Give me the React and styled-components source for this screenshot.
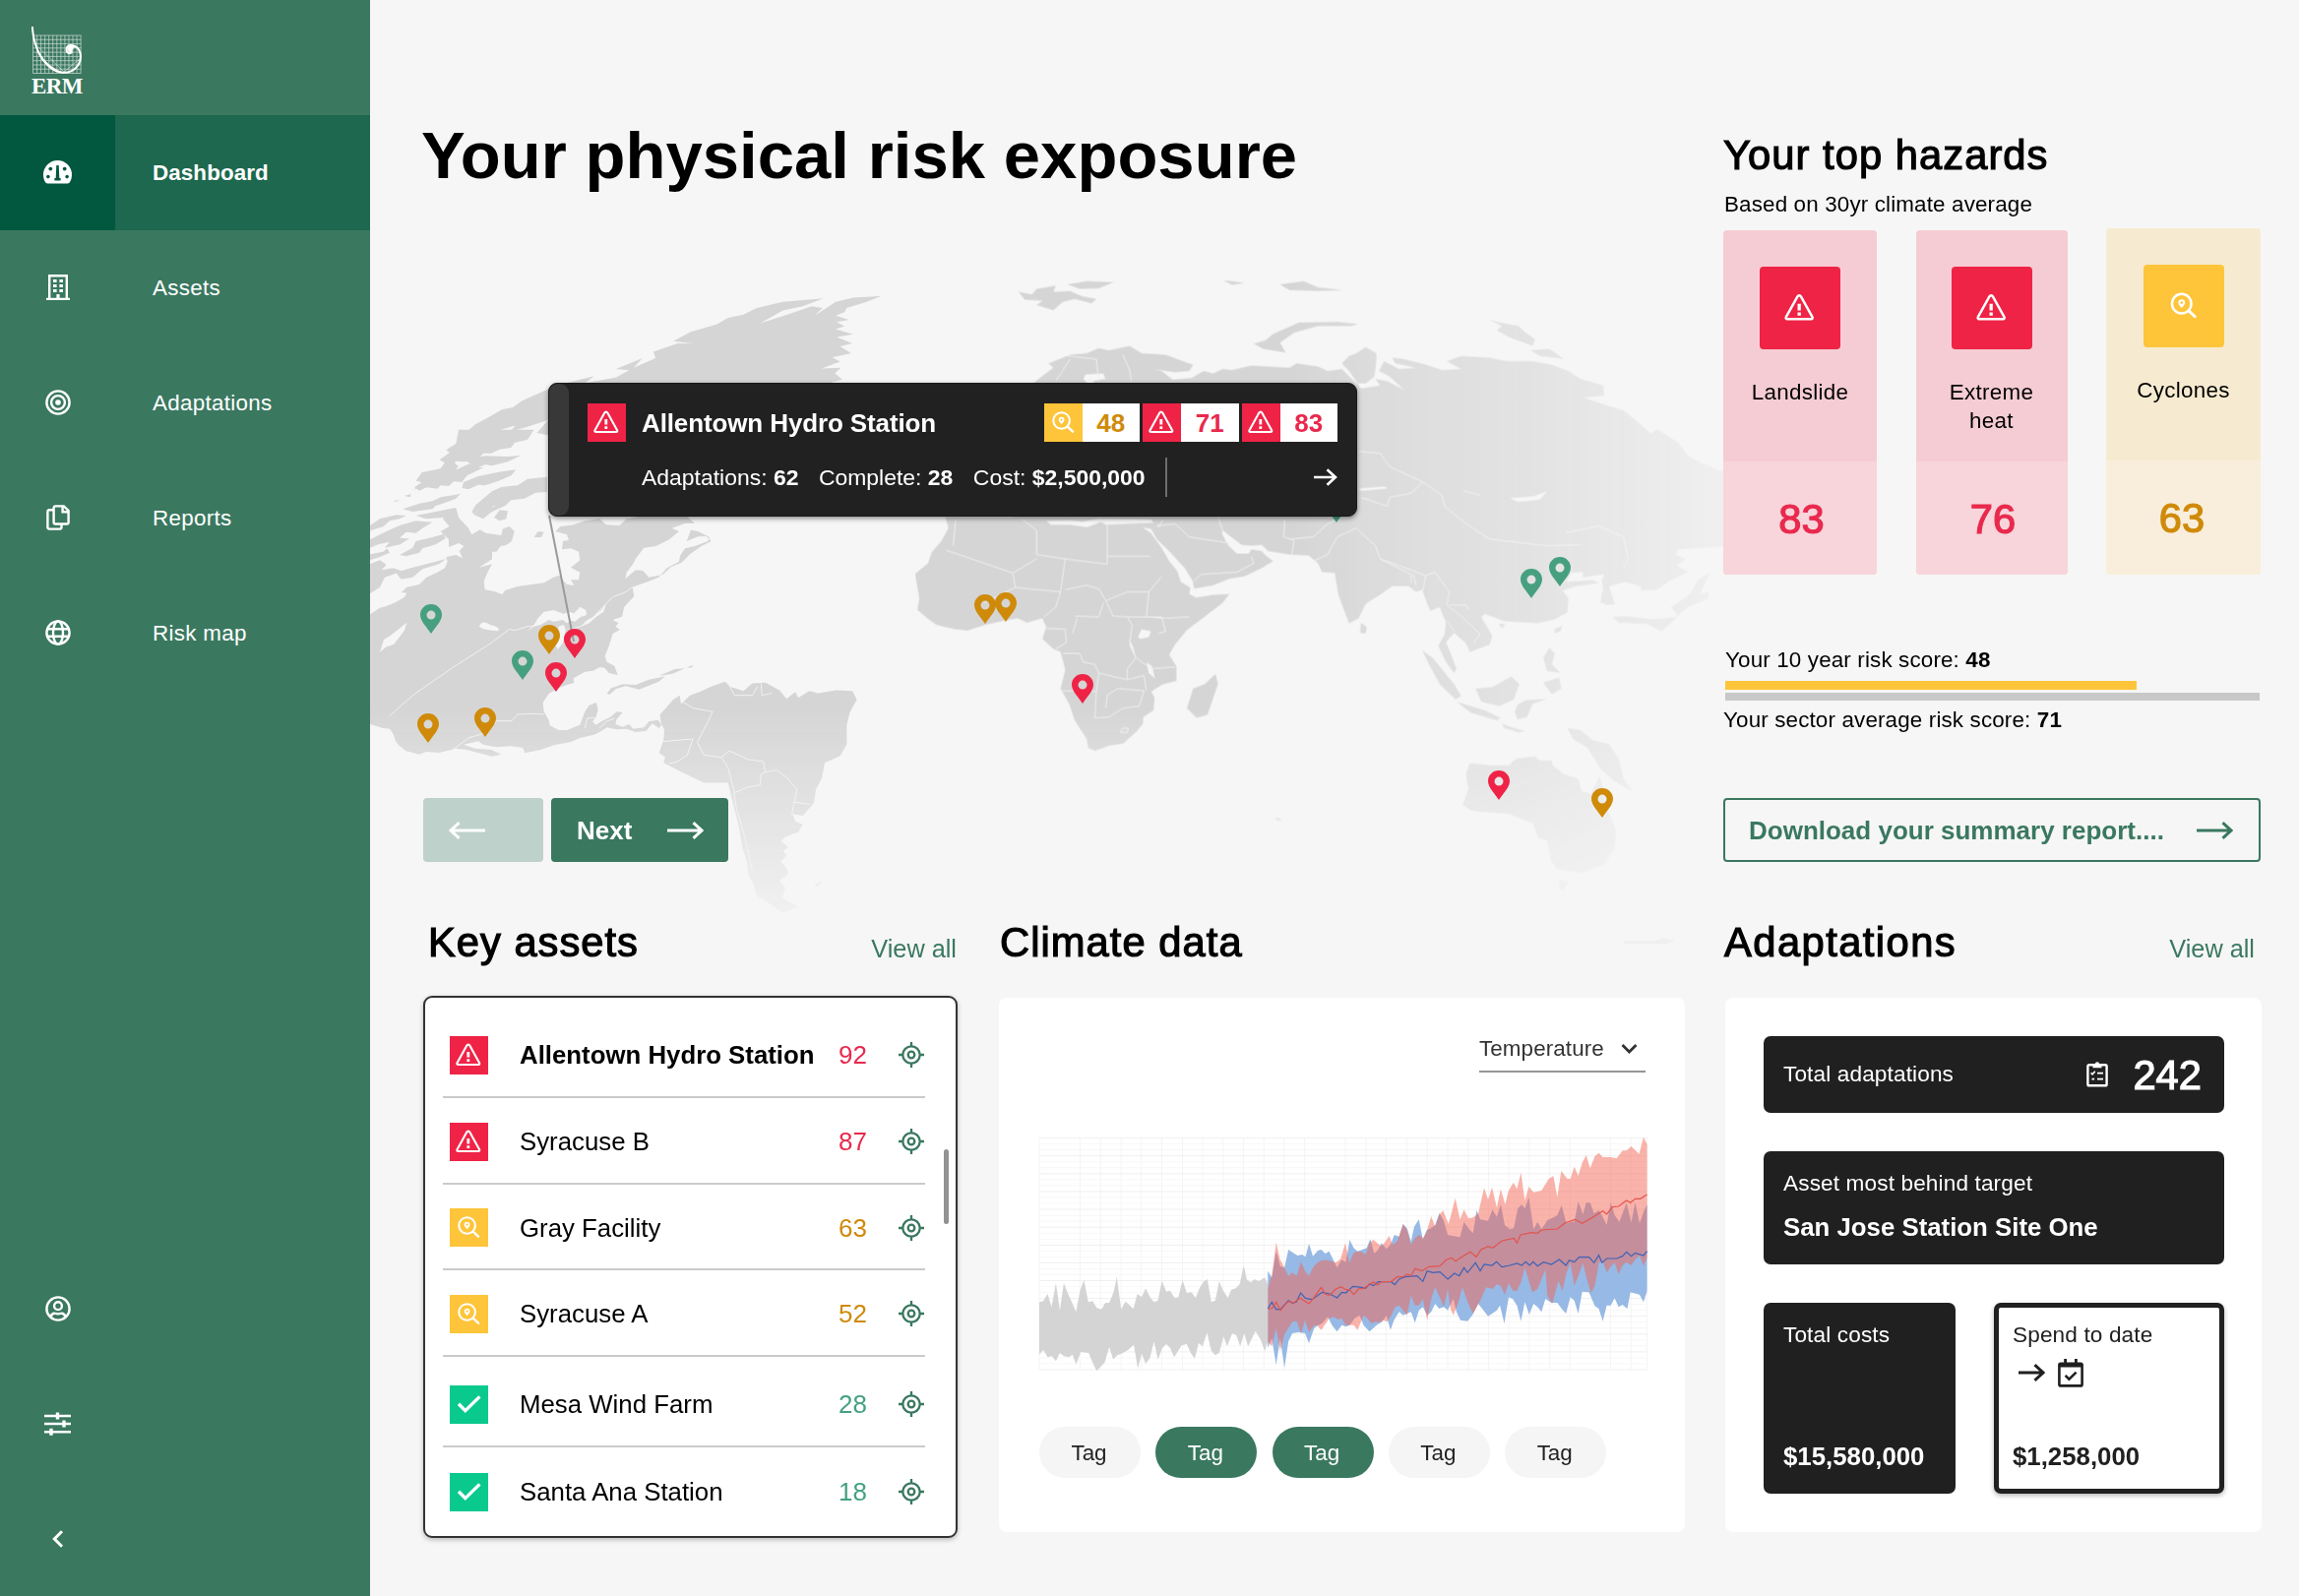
import React from "react";
import styled, { createGlobalStyle, css } from "styled-components";

const c = {
  green: "#3a7860",
  greenActive: "#1d684f",
  greenDark: "#02573f",
  page: "#f6f6f6",
  ink: "#202020",
  red: "#ef2346",
  redText: "#e9294d",
  yellow: "#fec53a",
  amber: "#cf8a0a",
  teal: "#46a080",
  mint: "#09c98c",
  land: "#d5d5d5",
};

const Global = createGlobalStyle`
  * { box-sizing: border-box; }
  body { margin: 0; background: ${c.page}; font-family: "Liberation Sans", Arial, sans-serif; color: #000; }
  svg { display: block; flex: none; }
`;

const mediumWeight = css`
  font-weight: 400;
  -webkit-text-stroke: 1.2px currentColor;
`;

const Page = styled.div`
  display: grid;
  grid-template-columns: 376px 1fr;
  width: 2336px;
  height: 1622px;
  overflow: hidden;
`;

/* ---------- Sidebar ---------- */

const Sidebar = styled.nav`
  display: flex;
  flex-direction: column;
  background: ${c.green};
  color: #fff;
`;
const LogoBox = styled.div`
  height: 117px;
  padding: 27px 0 0 32px;
`;
const LogoText = styled.div`
  width: 54px;
  margin-top: -2px;
  font: 700 23px/24px "Liberation Serif", "Times New Roman", serif;
  letter-spacing: -0.6px;
`;
const NavRow = styled.div`
  display: flex;
  align-items: center;
  height: ${(p) => (p.$active ? 116.5 : 117)}px;
  background: ${(p) => (p.$active ? c.greenActive : "transparent")};
  font-size: 22.4px;
  font-weight: ${(p) => (p.$active ? 700 : 400)};
  letter-spacing: ${(p) => (p.$active ? 0.1 : 0.3)}px;
`;
const NavIcon = styled.div`
  display: flex;
  align-items: center;
  justify-content: center;
  width: 117px;
  height: 100%;
  margin-right: 38px;
  background: ${(p) => (p.$active ? c.greenDark : "transparent")};
`;
const NavLabel = styled.span`
  padding-top: 1px;
`;
const NavSpacer = styled.div`
  flex: 1;
`;

/* ---------- Main area ---------- */

const Main = styled.main`
  position: relative;
  display: flex;
  flex-direction: column;
  padding: 0 37px 0 54px;
  background: ${c.page};
`;
const MapLayer = styled.svg`
  position: absolute;
  left: 0;
  top: 0;
`;
const Top = styled.section`
  display: flex;
  justify-content: space-between;
  height: 932px;
`;
const Hero = styled.div`
  display: flex;
  flex-direction: column;
  padding-top: 118px;
  z-index: 1;
`;
const Title = styled.h1`
  margin: 0 0 0 -2px;
  font-size: 67px;
  line-height: 80px;
  font-weight: 700;
  letter-spacing: 0.05px;
`;
const Pager = styled.div`
  display: flex;
  gap: 8px;
  margin-top: 613px;
`;
const PagerButton = styled.button`
  display: flex;
  align-items: center;
  justify-content: space-between;
  width: ${(p) => (p.$disabled ? 122 : 180)}px;
  height: 65px;
  padding: 0 25px 0 26px;
  border: 0;
  border-radius: 4px;
  background: ${(p) => (p.$disabled ? "#bfd1cb" : c.green)};
  color: #fff;
  font: 700 26px "Liberation Sans", Arial, sans-serif;
`;
const ButtonText = styled.span`
  padding-top: 2px;
`;
const Heading = styled.h2`
  margin: 0 0 0 ${(p) => p.$left || 0}px;
  padding-top: 1px;
  font-size: 41.7px;
  line-height: 49px;
  letter-spacing: ${(p) => p.$track}px;
  white-space: nowrap;
  ${mediumWeight}
`;

/* ---------- Hazards ---------- */

const HazardPanel = styled.aside`
  display: flex;
  flex-direction: column;
  width: 546px;
  margin-right: 2px;
  padding-top: 132px;
  z-index: 1;
`;
const Sub = styled.p`
  margin: ${(p) => p.$m};
  font-size: 22.4px;
  line-height: 30px;
  letter-spacing: 0.15px;
`;
const HazardRow = styled.div`
  display: flex;
  justify-content: space-between;
  align-items: flex-start;
  height: 350px;
`;
const hazardTone = {
  red: { top: "#f5ccd4", low: "#f7d5db", text: c.redText },
  yellow: { top: "#f6ebd0", low: "#f9eedb", text: c.amber },
};
const HazardCard = styled.div`
  display: flex;
  flex-direction: column;
  width: ${(p) => p.$w}px;
  height: ${(p) => (p.$tone === "yellow" ? 352 : 350)}px;
  margin-top: ${(p) => (p.$tone === "yellow" ? -2 : 0)}px;
  border-radius: 4px;
  overflow: hidden;
  background: ${(p) => hazardTone[p.$tone].top};
`;
const HazardTop = styled.div`
  display: flex;
  flex-direction: column;
  align-items: center;
  flex: 1;
  padding-top: 37px;
  font-size: 22.4px;
  line-height: 29px;
  letter-spacing: 0.3px;
  text-align: center;
`;
const HazardTile = styled.div`
  display: flex;
  align-items: center;
  justify-content: center;
  width: 82px;
  height: 84px;
  margin-bottom: 29px;
  border-radius: 4px;
  background: ${(p) => c[p.$tone]};
`;
const HazardLabel = styled.div`
  width: 110px;
`;
const HazardScore = styled.div`
  height: ${(p) => (p.$tone === "yellow" ? 116 : 115)}px;
  padding-left: ${(p) => (p.$tone === "yellow" ? 0 : 3)}px;
  padding-right: ${(p) => (p.$tone === "yellow" ? 3 : 0)}px;
  line-height: 117px;
  font-size: 41.7px;
  text-align: center;
  background: ${(p) => hazardTone[p.$tone].low};
  color: ${(p) => hazardTone[p.$tone].text};
  ${mediumWeight}
`;
const ScoreBar = styled.div`
  width: ${(p) => p.$w}px;
  height: ${(p) => p.$h}px;
  margin: 0 0 3px 2px;
  background: ${(p) => p.$color};
`;
const DownloadButton = styled.button`
  display: flex;
  align-items: center;
  justify-content: space-between;
  width: 546px;
  height: 65px;
  margin-top: 61px;
  padding: 0 26px 0 24px;
  border: 2px solid ${c.green};
  border-radius: 4px;
  background: transparent;
  color: ${c.green};
  font: 700 26px "Liberation Sans", Arial, sans-serif;
  white-space: nowrap;
`;

/* ---------- Map popup and pins ---------- */

const PinMark = styled.svg`
  position: absolute;
  left: ${(p) => p.$x - 376 - 11}px;
  top: ${(p) => p.$y - 28.5}px;
`;
const Popup = styled.div`
  position: absolute;
  left: 181px;
  top: 389px;
  z-index: 2;
  display: flex;
  width: 822px;
  height: 136px;
  border-radius: 9px;
  background: #212121;
  border: 1px solid #181818;
  box-shadow: 0 2px 5px rgba(0, 0, 0, 0.45);
  color: #fff;
`;
const PopupHandle = styled.div`
  width: 20px;
  border-radius: 9px;
  background: #383838;
`;
const PopupBody = styled.div`
  flex: 1;
  display: flex;
  flex-direction: column;
  padding: 20px 19px 0 19px;
`;
const PopupHead = styled.div`
  display: flex;
  align-items: center;
  height: 39px;
  font-size: 26px;
  font-weight: 700;
`;
const PopupName = styled.div`
  flex: 1;
  padding: 2px 0 0 16px;
  letter-spacing: -0.12px;
`;
const PopupMeta = styled.div`
  display: flex;
  align-items: center;
  height: 40px;
  margin-top: 16px;
  padding-left: 55px;
  font-size: 22.95px;
  white-space: nowrap;
`;
const Fact = styled.span`
  margin-right: 20.5px;
`;
const MetaDivider = styled.div`
  width: 2px;
  height: 40px;
  margin-right: auto;
  background: #6e6e6e;
`;
const Badge = styled.div`
  display: flex;
  margin-left: 3px;
`;
const BadgeValue = styled.div`
  width: 58.5px;
  height: 39px;
  background: #fff;
  line-height: 41px;
  text-align: center;
  color: ${(p) => (p.$tone === "yellow" ? c.amber : c.redText)};
`;
const Tile = styled.div`
  width: 39px;
  height: 39px;
  background: ${(p) => c[p.$tone]};
`;

/* ---------- Bottom cards ---------- */

const Bottom = styled.section`
  display: grid;
  grid-template-columns: 543px 697px 545px;
  column-gap: 42px;
  z-index: 1;
`;
const ColumnHead = styled.div`
  display: flex;
  justify-content: space-between;
  align-items: flex-start;
  height: 80px;
  padding: ${(p) => p.$pad || "0"};
`;
const ViewAll = styled.a`
  padding-top: 7px;
  font-size: 25.3px;
  line-height: 50px;
  color: ${c.green};
`;
const AssetCard = styled.div`
  display: flex;
  justify-content: space-between;
  height: 551px;
  padding: 13px 7px 0 18px;
  border: 2px solid #333;
  border-radius: 9px;
  background: #fff;
  box-shadow: 0 2px 5px rgba(0, 0, 0, 0.25);
`;
const AssetList = styled.div`
  width: 490px;
`;
const AssetRow = styled.div`
  display: grid;
  grid-template-columns: 39px 299px 43px 26px;
  column-gap: 25px;
  align-items: center;
  height: ${(p) => p.$h}px;
  padding: ${(p) => p.$pt}px 0 0 7px;
  border-bottom: ${(p) => (p.$last ? "0" : "2px solid #cbcbcb")};
  font-size: 26px;
  white-space: nowrap;
`;
const AssetName = styled.span`
  padding: 1px 0 0 7px;
  font-size: 25.8px;
  font-weight: ${(p) => (p.$bold ? 700 : 400)};
`;
const AssetScore = styled.span`
  padding: 1px 0 0 7px;
  color: ${(p) => p.$color};
`;
const ScrollTrack = styled.div`
  width: 5px;
  padding-top: 141px;
`;
const ScrollThumb = styled.div`
  height: 76px;
  border-radius: 3px;
  background: #929292;
`;
const Card = styled.div`
  display: flex;
  flex-direction: column;
  height: 543px;
  margin-top: 2px;
  margin-right: ${(p) => p.$mr || 0}px;
  padding: ${(p) => p.$pad};
  border-radius: 8px;
  background: #fff;
`;
const AdaptationColumn = styled.div`
  margin-left: -1px;
  width: 545px;
`;
const Select = styled.div`
  display: flex;
  align-items: center;
  justify-content: space-between;
  align-self: flex-end;
  width: 169px;
  height: 48px;
  padding: 2px 8px 0 0;
  border-bottom: 2px solid #959595;
  font-size: 22.4px;
  letter-spacing: 0.1px;
  color: #333;
`;
const ChartFrame = styled.div`
  margin: 60px 0 50px -6px;
  height: 250px;
`;
const TagRow = styled.div`
  display: flex;
  gap: 15.3px;
`;
const Tag = styled.span`
  width: 103px;
  height: 52px;
  border-radius: 26px;
  line-height: 53px;
  text-align: center;
  text-indent: -2px;
  font-size: 22.4px;
  background: ${(p) => (p.$on ? c.green : "#f5f5f5")};
  color: ${(p) => (p.$on ? "#fff" : "#222")};
`;
const StatBox = styled.div`
  display: flex;
  flex-direction: ${(p) => (p.$row ? "row" : "column")};
  align-items: ${(p) => (p.$row ? "center" : "flex-start")};
  width: ${(p) => p.$w}px;
  height: ${(p) => p.$h}px;
  padding: ${(p) => p.$pad};
  border-radius: 7px;
  background: ${(p) => (p.$light ? "#fff" : c.ink)};
  border: ${(p) => (p.$light ? `5px solid ${c.ink}` : "0")};
  box-shadow: ${(p) => (p.$light ? "0 2px 5px rgba(0,0,0,.3)" : "none")};
  color: ${(p) => (p.$light ? c.ink : "#fff")};
`;
const StatLabel = styled.div`
  font-size: 22.6px;
  line-height: 30px;
  letter-spacing: 0.13px;
`;
const StatStrong = styled.div`
  margin-top: ${(p) => p.$mt}px;
  font-size: 25.8px;
  line-height: 30px;
  font-weight: 700;
`;
const StatNumber = styled.div`
  padding: 2px 0 0 25px;
  font-size: 41.7px;
  line-height: 50px;
  ${mediumWeight}
`;
const StatPair = styled.div`
  display: flex;
  justify-content: space-between;
`;
const Push = styled.div`
  flex: 1;
`;
const StatIcons = styled.div`
  display: flex;
  align-items: center;
  gap: 13px;
  height: 30px;
  margin: 8px 0 0 6px;
`;

/* ---------- Icons ---------- */

const Line = ({ w, h, sw = 2.5, children, ...rest }) => (
  <svg width={w} height={h} viewBox={`0 0 ${w} ${h}`} fill="none" stroke="currentColor" strokeWidth={sw} {...rest}>
    {children}
  </svg>
);

const Gauge = () => (
  <svg width="29" height="24" viewBox="0 0 29 24" fill="#fff">
    <path d="M14.5 0A14.5 14.5 0 0 0 0 14.5c0 3 .8 5.600 2 7.600.6 1 1.300 1.300 2.200 1.300h20.600c.9 0 1.600-.3 2.200-1.300 1.200-2 2-4.600 2-7.600A14.500 14.500 0 0 0 14.500 0Z" />
    <g fill={c.greenDark}>
      <path d="M13.300 5h2.400l.6 13h1.300v2.600h-6.200V18h1.300Z" />
      <circle cx="7.300" cy="8.600" r="1.900" />
      <circle cx="21.700" cy="8.600" r="1.900" />
      <circle cx="4.900" cy="16.600" r="1.800" />
      <circle cx="24.100" cy="16.600" r="1.800" />
    </g>
  </svg>
);
const Building = () => (
  <svg width="24" height="26" viewBox="0 0 24 26" fill="#fff">
    <path fillRule="evenodd" d="M2 0h20v23.800h2V26H0v-2.200h2ZM4.400 2.400v21.400h6V20h3.200v3.800h6V2.400Z" />
    <path d="M7 5h3.600v3H7zM13.400 5H17v3h-3.600zM7 10h3.600v3H7zM13.400 10H17v3h-3.600zM7 15h3.600v3H7zM13.400 15H17v3h-3.600z" />
  </svg>
);
const Target = () => (
  <Line w={26} h={26} sw={2.4}>
    <circle cx="13" cy="13" r="11.600" />
    <circle cx="13" cy="13" r="6.900" />
    <circle cx="13" cy="13" r="2.800" fill="#fff" stroke="none" />
  </Line>
);
const Copy = () => (
  <Line w={24} h={26} sw={2.4}>
    <path d="M7.500 5.200H3A1.500 1.500 0 0 0 1.400 6.700v16.400a1.500 1.500 0 0 0 1.600 1.500h11a1.500 1.500 0 0 0 1.500-1.500v-3.400" />
    <path d="M9.300 1.400h8.500l4.800 4.600v11.800a1.700 1.700 0 0 1-1.700 1.700H9.300a1.700 1.700 0 0 1-1.700-1.700V3.100a1.700 1.700 0 0 1 1.700-1.700Z" />
    <path d="M16.600 1.600v5.600h5.800" />
  </Line>
);
const Globe = () => (
  <Line w={26} h={26} sw={2.4}>
    <circle cx="13" cy="13" r="11.600" />
    <ellipse cx="13" cy="13" rx="5" ry="11.600" />
    <path d="M2 9.200h22M2 16.800h22" />
  </Line>
);
const UserCircle = () => (
  <Line w={26} h={26} sw={2.4}>
    <circle cx="13" cy="13" r="11.600" />
    <circle cx="13" cy="10.200" r="3.900" />
    <path d="M5.400 21.500c1-3.400 3.500-3.900 5-3.600 1.700.5 3.500.5 5.200 0 1.500-.3 4 .2 5 3.600" />
  </Line>
);
const Sliders = () => (
  <Line w={27} h={24} sw={2.6}>
    <path d="M0 4h27M0 12h27M0 20.200h27" />
    <path d="M13.500.5v7M20 8.500v7M7 16.700v7" strokeWidth="3.400" />
  </Line>
);
const ChevronLeft = () => (
  <Line w={14} h={20} sw={3}>
    <path d="M11 2.300 3.300 10l7.700 7.700" />
  </Line>
);
const Arrow = ({ flip, len = 37, sw = 3 }) => (
  <Line w={len} h={18} sw={sw} transform={flip ? "scale(-1 1)" : undefined}>
    <path d={`M0 9H${len - 2}M${len - 10.5} 1.200 ${len - 2} 9l-8.500 7.800`} />
  </Line>
);
const AlertMark = ({ size = 39 }) => (
  <svg width={size} height={size} viewBox="0 0 39 39" fill="none" stroke="#fff" strokeWidth="2.100" strokeLinejoin="round">
    <path d="M17.300 9.600 7.500 27.200c-.5 1 0 1.800 1 1.800h20.600c1 0 1.500-.8 1-1.800L20.300 9.600c-.7-1.300-2.300-1.300-3 0Z" />
    <path d="M18.800 16v5.600M18.800 23.300v2.700" strokeWidth="2.800" />
  </svg>
);
const SearchMark = ({ size = 39 }) => (
  <svg width={size} height={size} viewBox="0 0 39 39" fill="none" stroke="#fff" strokeWidth="2.100" strokeLinecap="round">
    <circle cx="17.600" cy="17.500" r="8.300" />
    <path d="m23.700 23.700 5.300 4.900" strokeWidth="2.500" />
    <path d="M17.600 21.300c-1.800-1.900-2.900-3.300-2.900-4.700a2.900 2.900 0 0 1 5.800 0c0 1.400-1.100 2.800-2.900 4.700Z" fill="#fff" stroke="none" />
    <circle cx="17.600" cy="16.600" r="1.100" fill={c.yellow} stroke="none" />
  </svg>
);
const CheckMark = () => (
  <svg width="39" height="39" viewBox="0 0 39 39" fill="none" stroke="#fff" strokeWidth="3.400">
    <path d="M9 18.800 15.800 25.600 30.400 11.400" />
  </svg>
);
const Crosshair = () => (
  <Line w={26} h={26} sw={2.3} stroke={c.green}>
    <circle cx="13" cy="13" r="8.700" />
    <circle cx="13" cy="13" r="3.300" />
    <path d="M13 0v5M13 21v5M0 13h5M21 13h5" />
  </Line>
);
const ChevronDown = () => (
  <Line w={17} h={12} sw={2.8}>
    <path d="m1.500 2 7 7 7-7" />
  </Line>
);
const Clipboard = () => (
  <Line w={22} h={27} sw={2.4}>
    <path d="M7 4.200H2.800a1.400 1.400 0 0 0-1.400 1.400v18.300a1.400 1.400 0 0 0 1.400 1.400h16.400a1.400 1.400 0 0 0 1.400-1.400V5.600a1.400 1.400 0 0 0-1.400-1.400H15" />
    <path d="M6.500 3h2.200a2.400 2.400 0 0 1 4.600 0h2.200v4.200h-9Z" fill="#fff" stroke="none" />
    <path d="M11 12.600h6M11 18.600h6" strokeWidth="1.800" />
    <path d="m4.600 12.400 1.500 1.400 2.700-3M5.500 18.600h2.600" strokeWidth="1.700" />
  </Line>
);
const Calendar = () => (
  <Line w={26} h={29} sw={2.6} stroke={c.ink}>
    <rect x="1.400" y="4.800" width="23.200" height="22.600" rx="1.500" />
    <path d="M1.400 4.500h23.200v4H1.400z" fill={c.ink} stroke="none" />
    <path d="M7.600 0v5M18.400 0v5" strokeWidth="2.800" />
    <path d="m7.600 16.800 3.800 3.800 7.200-7" />
  </Line>
);

const Logo = () => (
  <svg width="54" height="51" viewBox="0 0 54 51" fill="none" stroke="#fff">
    <g strokeWidth=".7" opacity=".75">
      {Array.from({ length: 13 }, (_, i) => (
        <path key={`v${i}`} d={`M${1.5 + i * 4.05} 9v38.500`} />
      ))}
      {Array.from({ length: 10 }, (_, i) => (
        <path key={`h${i}`} d={`M1.500 ${9 + i * 4.28}h48.800`} />
      ))}
      <path d="M3 17 33 46 50 32" />
    </g>
    <path d="M.800 0C2 18 8 32 19 41.500 27 48 38 49 45 42c6-6 6.500-15 1.500-20.500-4-4-11-3.300-11 2 0 3.500 4 5 6 2" strokeWidth="2" />
    <path d="M6 25C11 36 20 46 33 47c-11-3-20-11-27-22Z" fill="#fff" strokeWidth=".8" />
    <path d="M36.500 21.500c0-2.500 5-3.500 8.500-.5-3 0-3 2-4 4.500-1 1.500-5 0-4.500-4Z" fill="#fff" strokeWidth=".6" />
  </svg>
);

const Pin = ({ x, y, tone }) => (
  <PinMark $x={x} $y={y} width="22" height="30" viewBox="0 0 22 30">
    <path fillRule="evenodd" fill={c[tone]} d="M11 0C4.900 0 0 4.800 0 10.800 0 17.500 6.500 23 11 30c4.500-7 11-12.500 11-19.200C22 4.800 17.100 0 11 0Zm0 6.600a4.500 4.500 0 1 1 0 9 4.500 4.500 0 0 1 0-9Z" />
  </PinMark>
);

/* ---------- World map ---------- */

const americaArctic = [
  "M270 -10H500L480 20 440 30 430 45 395 50 370 62 345 62 330 78 290 88 262 86 250 95 215 84 245 62 232 52 262 32Z",
  "M135 165 160 150 140 146 158 120 200 112 245 100 270 98 262 112 300 95 330 92 345 84 372 88 330 104 345 106 296 130 280 150 255 148 240 162 215 160 205 170 172 166 150 176Z",
  "M290 82 350 70 420 72 460 68 420 88 372 100 350 96 330 104 312 100Z",
  "M285 150 330 132 400 118 445 112 430 130 392 146 350 160 330 158 300 172 280 168Z",
  "M400 165 450 160 480 140 540 134V180L505 182 470 200 430 205 412 222 372 240 380 222 355 228 372 212 330 232 318 250 310 240 322 220 345 200 372 178Z",
  "M318 250 360 190 390 196 402 212 370 225 392 228 365 245 345 262Z",
  "M100 232 150 215 190 208 215 196 275 186 262 200 220 216 200 222 190 232 130 240Z",
  "M70 208 90 204 80 210Z",
  "M105 192 125 186 122 196Z",
  "M140 252 200 240 260 228 250 246 220 258 170 262Z",
  "M0 282 30 262 80 250 110 252 90 262 60 268 40 286 0 298Z",
  "M0 325 50 300 90 282 140 268 190 272 160 290 140 305 110 302 90 320 120 322 92 340 45 350 60 332 25 340 0 350Z",
  "M90 372 130 350 140 330 190 318 225 308 230 322 200 340 160 352 150 365 110 376Z",
  "M0 370 40 362 52 352 60 365 30 378 0 388Z",
  "M0 400 30 388 50 402 35 418 70 412 95 420 75 430 45 440 30 470 0 490Z",
  "M78 425 130 410 200 392 232 384 210 400 160 415 130 440 95 446Z",
  "M395 235 420 238 415 262 395 268 378 258Z",
];
const americaMain =
  "M-20 566 30 533 50 528 80 515 105 500 112 488 95 486 112 470 150 462 172 440 205 425 228 412 236 392 232 378 262 372 282 382 272 360 286 345 270 336 240 348 240 325 215 300 242 285 222 262 230 245 262 228 270 258 300 290 310 310 335 295 352 305 400 312 405 292 425 285 440 300 432 330 415 342 398 345 385 362 372 362 372 385 332 410 372 400 358 425 347 452 350 478 376 482 403 492 412 480 450 468 530 457 556 442 576 434 600 462 622 465 612 448 636 448 640 425 612 410 640 388 636 362 612 352 585 355 588 330 606 326 600 310 565 300 580 285 620 280 655 268 700 262 720 280 760 282 782 262 900 240 960 250 990 275 960 276 920 290 942 300 912 325 872 345 835 350 812 380 800 402 782 425 778 445 810 418 832 420 850 440 892 432 918 408 950 395 975 370 1010 345 1040 330 1025 315 1000 316 965 330 978 296 1000 300 1035 318 1030 330 990 345 960 352 945 375 942 392 905 412 880 440 842 455 822 462 800 470 805 498 775 530 768 560 740 570 758 580 748 590 762 600 740 612 728 650 716 680 722 698 745 710 755 738 728 732 715 716 700 714 680 725 655 728 620 748 622 762 600 768 575 778 545 795 527 822 530 850 545 875 548 892 575 906 600 906 640 890 655 850 668 830 690 822 695 845 688 868 678 880 688 890 705 880 735 865 752 850 770 852 752 872 748 888 770 896 790 888 802 902 835 898 850 880 878 875 888 890 882 900 860 886 842 908 810 912 782 902 752 904 722 898 700 912 682 920 640 930 612 942 560 952 520 966 472 976 466 960 430 955 385 958 345 950 330 940 285 950 320 962 370 966 400 980 372 986 330 975 290 965 262 962 210 975 170 972 150 980 110 970 90 955 78 940 72 920 60 902 40 900 0 888 -20 892Z";
const americaWater = [
  "M30 668 42 630 62 618 112 578 105 602 72 645 50 652Z",
  "M333 590C338 574 350 574 368 586 390 590 396 598 390 604 372 600 345 602 333 590Z",
  "M478 605 500 585 512 565 530 545 560 540 590 552 605 545 622 550 640 530 658 540 660 555 640 562 625 575 612 572 600 580 588 570 560 575 545 570 520 585 500 590Z",
  "M575 590 590 585 596 600 588 640 572 660 562 640 572 620Z",
  "M640 592 660 572 680 560 705 540 720 520 712 545 690 560 668 580Z",
];
const caribbean = [
  "M722 795 735 778 770 766 810 768 850 752 900 742 880 758 850 770 820 782 780 772 750 780 730 798Z",
  "M880 740 930 720 960 718 920 735Z",
  "M965 715 985 708 980 716Z",
  "M500 318 512 300 530 302 522 318Z",
];
const americaBorders = [
  "M60 862 130 800 260 710 370 640 425 598 440 602 480 590 500 588",
  "M610 600 640 590 668 575 700 540 740 500 780 485 800 470",
  "M250 968 300 930 360 912 385 878 432 878 450 858 500 856 530 858",
  "M655 900 662 870 690 868M700 900 720 880 745 870",
];

const greenland =
  "M96 550 118 535 108 520 140 505 160 500 170 485 158 478 190 455 225 425 205 425 240 395 275 375 300 360 325 355 345 340 400 315 440 300 510 282 490 298 560 285 590 268 560 265 620 240 600 262 650 240 645 225 700 205 735 205 690 200 730 178 790 160 815 145 850 138 880 122 940 108 1032 100 985 118 940 128 888 158 950 138 1005 118 1030 122 1012 140 1060 108 1100 98 1165 94 1130 108 1085 122 1080 132 1060 140 1090 150 1062 155 1080 165 1060 172 1100 184 1062 190 1098 205 1070 212 1095 228 1052 238 1070 248 1028 264 1072 262 1058 275 1075 290 1050 297 1040 420 405 420 380 415 405 385 360 400 320 412 330 398 290 410 300 420 260 430 268 448 240 455 215 470 190 480 200 495 165 515 140 530Z";
const southAmerica =
  "M660 1075 690 1040 705 1030 708 1050 728 1030 750 1022 775 1010 808 998 820 1010 850 1020 870 1002 900 1000 932 1018 948 1038 968 1022 975 1035 1000 1020 1020 1025 1060 1018 1098 1020 1108 1040 1092 1070 1085 1100 1085 1145 1070 1172 1035 1188 1028 1225 1015 1250 1010 1282 985 1312 962 1308 968 1325 985 1332 975 1350 945 1362 935 1372 952 1385 940 1395 948 1405 935 1420 948 1435 952 1448 932 1465 945 1480 938 1505 975 1525 940 1540 905 1515 880 1500 872 1470 862 1452 858 1420 848 1390 840 1340 828 1290 815 1235 760 1235 720 1215 668 1188 672 1175 658 1165 668 1135 670 1110 662 1095Z";
const southBorders = [
  "M705 1040 735 1060 780 1068 765 1100 745 1140 760 1170 800 1175 818 1160 860 1180 895 1185 900 1210 925 1205 948 1222 972 1250 965 1285",
  "M668 1138 735 1132 722 1170 700 1185 680 1190",
  "M800 1175 815 1200 830 1258 860 1245 888 1240 890 1215 900 1210",
  "M815 1002 830 1030 870 1030 882 1010M890 1002 892 1030 915 1025",
  "M828 1258 835 1300 850 1350 870 1440",
  "M960 1310 965 1280 1000 1285",
];

const eurasiaAfrica =
  "M-81 595 -75 620 -90 650 -110 675 -118 700 -145 724 -141 748 -136 780 -140 806 -118 826 -100 840 -81 845 -60 850 -35 853 2 840 39 831 70 825 90 835 122 825 130 845 122 872 145 895 160 902 170 942 160 985 178 1020 190 1058 215 1100 218 1120 232 1127 262 1115 292 1110 320 1082 333 1065 333 1050 355 1035 357 1005 350 992 375 975 403 968 403 935 388 908 400 885 425 852 470 815 500 790 514 770 480 772 445 778 430 770 432 755 412 742 405 718 388 695 372 665 350 632 332 618 350 622 362 645 390 675 420 710 437 740 440 758 480 750 515 735 545 730 580 712 606 695 590 682 582 672 560 668 555 678 530 678 512 660 498 632 500 625 518 640 540 658 560 660 582 658 595 672 640 680 680 682 700 700 708 720 735 722 742 770 752 800 765 837 785 825 800 792 832 770 855 752 890 752 905 765 918 760 928 790 935 808 955 800 968 835 965 862 952 888 968 925 985 950 990 940 978 905 968 880 985 858 1010 882 1018 902 1060 885 1065 865 1042 822 1050 815 1090 832 1160 836 1195 828 1222 812 1225 780 1212 762 1240 752 1290 745 1275 738 1220 742 1230 722 1255 720 1255 732 1300 725 1295 740 1302 795 1322 792 1310 752 1345 742 1375 752 1378 762 1410 760 1440 738 1475 720 1452 705 1470 690 1450 680 1455 668 1500 665 1600 660 1650 655 1660 520 1570 490 1545 490 1500 470 1475 455 1455 425 1410 395 1398 405 1370 378 1340 352 1298 338 1255 322 1195 320 1240 325 1300 318 1298 295 1250 280 1225 262 1190 248 1150 240 1095 240 1060 232 1000 228 970 240 1000 258 960 260 920 246 880 235 855 232 862 245 905 255 870 258 838 240 828 262 850 275 880 305 845 285 820 280 830 295 790 302 765 262 750 245 765 228 780 222 800 208 822 222 822 240 818 275 800 290 780 290 750 258 720 262 700 252 655 245 640 255 560 250 520 260 500 258 480 268 460 262 435 278 395 282 372 262 355 258 400 265 430 262 438 248 380 225 330 222 305 205 262 215 240 210 215 222 180 225 135 245 145 255 108 285 60 340 60 595Z";
const eastIslands = [
  "M485 952 490 975 468 1045 445 1052 425 1030 438 985 462 975Z",
  "M790 835 802 845 800 860 788 858Z",
  "M918 898 940 915 985 975 1000 1002 988 1010 955 975 935 935Z",
  "M990 1015 1050 1035 1082 1052 1075 1058 1020 1040Z",
  "M1085 1065 1110 1075 1135 1082 1120 1085 1090 1075Z",
  "M1030 985 1065 982 1105 958 1122 975 1110 1010 1080 1025 1042 1015Z",
  "M1118 1022 1135 1012 1180 1008 1150 1020 1138 1050 1118 1055 1112 1038Z",
  "M1172 915 1185 892 1196 905 1190 930 1208 950 1180 945Z",
  "M1172 972 1205 960 1210 985 1190 998Z",
  "M1195 850 1212 842 1208 855 1196 860Z",
  "M1078 838 1092 838 1086 848Z",
  "M1222 1075 1250 1080 1275 1102 1310 1112 1330 1145 1340 1190 1358 1218 1320 1195 1290 1165 1265 1120 1235 1100Z",
  "M1003 1250 1015 1215 1010 1180 1018 1155 1060 1160 1100 1160 1115 1145 1155 1140 1165 1150 1190 1148 1192 1160 1215 1180 1245 1190 1252 1218 1272 1225 1290 1185 1300 1220 1308 1262 1325 1310 1322 1350 1300 1385 1250 1405 1200 1395 1188 1375 1180 1330 1162 1325 1150 1292 1100 1270 1040 1265 1020 1262Z",
  "M1205 1420 1225 1425 1215 1445 1205 1440Z",
  "M72 82 100 88 110 75 150 68 145 82 180 80 205 92 235 98 225 108 190 98 165 105 145 124 110 112 122 102 85 100Z",
  "M175 65 215 58 272 60 240 74 200 75Z",
  "M565 200 590 192 605 178 660 152 740 150 785 155 770 160 700 160 650 175 620 198 632 220 585 212Z",
  "M500 55 545 62 520 66Z",
  "M620 65 670 58 700 72 752 78 700 80 640 78Z",
  "M1060 145 1080 152 1120 160 1135 175 1155 190 1150 205 1100 185 1075 170 1085 160Z",
  "M1145 215 1185 212 1215 235 1165 228Z",
  "M1318 822 1345 820 1400 828 1450 822 1475 800 1518 780 1518 765 1500 770 1522 720 1495 740 1480 770 1440 800 1455 820 1420 855 1390 838 1330 835Z",
  "M1295 765 1315 772 1320 795 1292 790Z",
  "M610 1278 625 1283 615 1286Z",
];
const eastWater = [
  "M208 280 212 270 250 268 254 280 232 284 222 298Z",
  "M130 603 180 602 205 605 240 598 350 600 355 608 300 610 255 612 245 606 215 618 180 612 140 612Z",
  "M1102 552 1150 548 1180 536 1165 555 1120 560Z",
  "M322 868 330 850 350 855 345 868 328 872Z",
  "M303 870 312 890 318 915 308 895Z",
  "M340 925 352 935 358 962 345 950Z",
  "M785 530 840 525 845 530 790 535Z",
];
const eastBorders = [
  "M80 600 110 625 110 680 170 690 258 702 258 612M258 684 348 684",
  "M-80 670 60 722 110 690M60 722 65 755 0 790",
  "M-60 600 -65 660M65 755 160 765 170 688M160 765 150 800 125 822",
  "M170 760 215 750 240 758 255 785 300 765 345 765 372 730",
  "M255 785 270 820 300 822 340 822 380 825 430 822M345 765 340 822 372 822 380 855 365 860",
  "M190 820 240 822 250 790M185 860 195 825M130 848 170 850 172 880 150 895",
  "M165 905 200 905 208 925 232 930 240 950 300 965 300 940 318 915 305 885 310 840 300 822",
  "M165 990 235 992 240 950M318 915 350 940 400 936M300 965 335 955 340 990",
  "M235 992 232 1052 262 1050 290 1030 325 1025 335 990M255 1030 258 1000 280 985 335 990",
  "M285 1085 290 1075 302 1075 300 1085Z",
  "M362 615 400 610 430 640 520 655M375 600 365 618M440 740 455 725 530 720 565 700 560 685",
  "M490 595 500 625M630 600 628 640 650 648 645 680M640 645 690 640 720 610 740 600",
  "M690 695 720 680 740 640 780 620 820 660 830 690 895 725 895 745M830 690 870 705 925 728 945 720",
  "M900 725 905 750M925 728 920 762M945 720 975 765 970 795 1000 820 1040 862 1025 882",
  "M975 795 1010 795 1015 805M970 830 985 855",
  "M785 445 830 450 850 480 920 515 895 540 850 550 845 570 790 550M920 515 960 545 965 570 1010 610 1060 645 1180 660 1250 658",
  "M1005 535 1040 545M1220 630 1290 615 1340 640 1350 690 1340 710M290 225 305 260 308 285M175 228 235 235 240 285M150 285 180 235",
];

const thin = { fill: "none", stroke: "#f1f1f1", strokeWidth: 1, vectorEffect: "non-scaling-stroke" };
const Shapes = ({ list, ...rest }) => list.map((d, i) => <path key={i} d={d} {...rest} />);

const WorldMap = () => (
  <MapLayer width="1960" height="1010" viewBox="376 0 1960 1010">
    <defs>
      <linearGradient id="fadeX" gradientUnits="userSpaceOnUse" x1="376" x2="1860" y1="0" y2="0">
        <stop offset="0" stopColor="#fff" />
        <stop offset=".63" stopColor="#fff" />
        <stop offset=".69" stopColor="#cccccc" />
        <stop offset=".8" stopColor="#929292" />
        <stop offset=".92" stopColor="#343434" />
        <stop offset="1" stopColor="#000" />
      </linearGradient>
      <linearGradient id="fadeY" x1="0" x2="0" y1="0" y2="1">
        <stop offset="0" stopColor="#000" stopOpacity="0" />
        <stop offset="1" stopColor="#000" stopOpacity=".92" />
      </linearGradient>
      <mask id="fade" maskUnits="userSpaceOnUse" x="376" y="0" width="1960" height="1010">
        <rect x="376" y="0" width="1960" height="1010" fill="url(#fadeX)" />
        <rect x="376" y="720" width="1960" height="225" fill="url(#fadeY)" />
      </mask>
    </defs>
    <g mask="url(#fade)" fill={c.land}>
      <g transform="translate(376 260) scale(.4464 .4337)">
        <path d={greenland} />
        <path d={southAmerica} />
        <Shapes list={southBorders} {...thin} />
        <path d="M1010 1475 1028 1465 1020 1478Z" />
      </g>
      <g transform="translate(376 440) scale(.33333)">
        <Shapes list={americaArctic} />
        <path d={americaMain} />
        <Shapes list={caribbean} />
        <Shapes list={americaWater} fill={c.page} />
        <Shapes list={americaBorders} {...thin} />
      </g>
      <g transform="translate(1000 260) scale(.4847 .4464)">
        <path d={eurasiaAfrica} />
        <Shapes list={eastIslands} />
        <Shapes list={eastWater} fill={c.page} />
        <Shapes list={eastBorders} {...thin} />
      </g>
    </g>
    <path d="M1650 956h34l6-3 12 3-8 3h-44z" fill="#efefef" />
    <path d="M558 524 583 652" stroke="#9b9b9b" strokeWidth="2" />
  </MapLayer>
);

/* ---------- Climate chart ---------- */

const history =
  "15,520 25,517 36,495 46,535 57,462 67,545 77,462 88,495 108,550 118,485 128,453 139,520 150,517 160,537 172,542 182,522 192,522 203,490 211,443 222,542 233,518 253,540 263,495 274,505 284,478 295,505 305,520 315,515 325,455 336,488 346,485 357,507 367,505 377,453 388,492 400,490 410,507 420,478 430,458 440,450 450,520 460,515 470,457 480,485 492,507 500,482 512,478 522,465 532,408 540,452 550,460 560,450 570,457 585,445 593,465 593,640 585,670 575,635 562,608 555,625 543,655 533,615 523,655 513,620 503,615 490,655 481,625 470,675 460,682 450,668 439,613 428,655 418,645 408,692 398,675 388,648 375,652 356,688 346,660 336,648 326,660 315,695 305,640 295,690 284,708 274,677 264,722 254,650 240,665 222,678 212,682 202,695 192,657 180,705 172,715 160,730 150,705 140,675 120,672 108,710 99,680 90,688 77,685 67,675 57,700 47,685 36,688 25,665 15,680";
const blueBand =
  "593,425 603,445 614,365 624,410 635,415 645,360 657,370 668,378 680,375 688,382 697,342 707,380 720,362 728,360 738,372 748,365 768,415 780,390 790,398 800,330 810,355 820,365 832,360 843,355 852,328 862,372 872,360 880,340 893,358 903,345 913,315 925,320 935,282 945,295 955,335 963,290 975,268 985,330 995,300 1006,295 1016,285 1027,248 1037,270 1048,315 1060,318 1079,322 1089,275 1100,295 1112,310 1121,240 1130,268 1150,272 1161,238 1172,260 1182,222 1192,285 1205,298 1215,295 1225,235 1235,222 1243,235 1253,200 1265,298 1275,275 1285,298 1300,270 1315,262 1325,255 1336,225 1348,280 1360,275 1368,275 1378,213 1390,252 1398,217 1408,217 1418,250 1430,240 1440,260 1450,285 1460,215 1470,255 1482,275 1500,217 1512,278 1522,215 1533,280 1543,245 1552,222 1552,487 1543,520 1533,497 1510,490 1502,540 1490,528 1480,535 1470,508 1460,530 1450,530 1440,578 1430,540 1420,532 1405,490 1388,488 1378,555 1368,515 1358,505 1347,555 1336,540 1325,522 1310,522 1295,510 1285,550 1275,535 1265,525 1254,558 1243,520 1233,578 1223,530 1212,510 1202,505 1191,585 1180,530 1172,545 1150,563 1135,540 1125,525 1110,560 1098,578 1080,575 1070,550 1062,510 1048,545 1038,535 1026,540 1016,525 1006,550 996,560 985,535 975,545 965,583 955,550 945,555 935,560 925,550 912,575 903,605 893,560 882,580 868,590 850,610 835,590 825,560 812,570 800,590 790,595 780,590 768,610 755,590 745,565 730,585 718,592 710,600 697,645 687,615 670,612 655,615 645,640 635,720 624,630 614,712 603,630 593,660";
const redBand =
  "593,480 598,455 603,440 614,338 624,390 635,415 645,440 655,430 666,440 677,397 687,425 697,440 707,415 718,400 730,392 745,392 757,397 765,400 777,388 789,340 799,400 810,370 820,365 830,367 840,375 850,340 860,330 870,340 880,350 890,335 900,318 908,345 920,335 935,282 945,300 955,345 965,325 975,315 985,325 995,305 1006,258 1016,290 1026,255 1036,240 1050,282 1067,203 1079,268 1089,238 1100,265 1112,262 1125,250 1140,172 1150,208 1160,170 1172,232 1182,175 1193,222 1202,180 1214,155 1223,175 1233,125 1243,210 1253,168 1265,185 1285,180 1303,145 1315,135 1325,200 1335,120 1350,143 1358,145 1368,107 1378,135 1388,95 1398,72 1408,112 1420,75 1430,65 1440,78 1460,78 1475,82 1490,58 1500,58 1512,45 1532,68 1543,17 1552,38 1552,385 1543,410 1533,378 1522,390 1512,408 1500,398 1490,408 1480,435 1470,400 1460,412 1450,430 1440,395 1430,400 1420,470 1410,492 1400,450 1390,402 1378,440 1368,470 1358,400 1348,432 1338,485 1328,455 1312,525 1300,500 1295,420 1285,450 1275,480 1262,490 1253,455 1243,415 1233,460 1223,485 1213,485 1202,462 1192,498 1182,470 1172,465 1162,480 1145,475 1130,515 1112,555 1100,525 1085,475 1075,520 1062,560 1055,540 1048,480 1038,535 1026,500 1016,475 1006,510 996,575 985,510 975,530 965,530 955,500 945,560 935,545 925,530 915,535 905,560 895,580 885,575 875,582 865,580 855,585 845,570 835,560 820,605 810,590 790,590 780,570 770,572 758,565 748,570 728,605 718,592 710,590 697,612 687,575 677,615 666,578 655,580 635,618 624,668 614,600 603,655 593,640";
const redLine =
  "593,540 603,540 614,520 625,545 635,530 645,518 658,522 675,508 697,525 710,505 728,475 738,495 748,500 765,480 778,473 790,482 800,482 810,497 822,480 835,478 845,470 860,458 870,468 880,458 905,457 920,443 935,443 945,435 955,440 965,418 983,425 1000,412 1028,410 1045,390 1058,385 1068,395 1080,385 1105,367 1120,382 1132,360 1150,350 1162,355 1185,333 1215,325 1223,340 1232,315 1260,308 1275,310 1285,300 1325,297 1345,278 1370,268 1388,280 1410,265 1440,242 1450,252 1465,230 1480,228 1500,210 1510,217 1522,205 1535,205 1552,192";
const blueLine =
  "593,540 603,520 614,542 625,542 645,515 655,523 665,520 676,492 688,508 705,512 730,490 750,495 768,507 780,490 790,492 808,472 830,475 840,478 850,465 860,470 872,458 905,458 914,467 925,450 940,443 970,440 985,457 996,425 1010,430 1028,428 1048,450 1065,432 1077,440 1089,415 1098,430 1118,400 1130,425 1140,405 1160,408 1171,397 1185,413 1205,408 1223,402 1235,408 1245,397 1255,408 1264,397 1275,410 1290,398 1310,405 1330,390 1347,408 1355,392 1368,398 1380,383 1405,383 1418,400 1430,377 1438,400 1450,387 1475,387 1490,380 1500,367 1512,380 1522,370 1543,378 1552,365";

const verticals = [15, 118, 170, 222, 273, 325, 377, 428, 480, 531, 583, 634, 686, 789, 841, 892, 944, 996, 1048, 1100, 1151, 1202, 1254, 1306, 1357, 1460, 1511, 1552];

const ClimateChart = () => (
  <svg width="630" height="250" viewBox="0 0 1568 750" preserveAspectRatio="none">
    <g fill="none" stroke="#f4f4f4" strokeWidth="1">
      {verticals.map((x) => (
        <path key={x} d={`M${x} 18V728`} vectorEffect="non-scaling-stroke" />
      ))}
      {Array.from({ length: 40 }, (_, i) => (
        <path key={i} d={`M15 ${20 + i * 18.1}H1552`} vectorEffect="non-scaling-stroke" stroke={i % 3 === 0 ? "#efefef" : "#f7f7f7"} />
      ))}
    </g>
    <polygon points={history} fill="#d4d4d4" />
    <polygon points={blueBand} fill="#97b9e5" />
    <polygon points={redBand} fill="rgba(245,97,78,.48)" />
    <polyline points={blueLine} fill="none" stroke="#3f62b5" strokeWidth="1.200" vectorEffect="non-scaling-stroke" />
    <polyline points={redLine} fill="none" stroke="#e2544f" strokeWidth="1.200" vectorEffect="non-scaling-stroke" />
  </svg>
);

/* ---------- Data ---------- */

const nav = [
  ["Dashboard", Gauge],
  ["Assets", Building],
  ["Adaptations", Target],
  ["Reports", Copy],
  ["Risk map", Globe],
];
const pins = [
  [438, 642.5, "teal"], [557.7, 663, "amber"], [584, 667, "red"], [531.3, 689.4, "teal"], [564.8, 701, "red"],
  [435, 753, "amber"], [493.4, 747.5, "amber"], [1001, 632, "amber"], [1021.5, 630.4, "amber"], [1100.3, 713.6, "red"],
  [1556.4, 606, "teal"], [1584.5, 594, "teal"], [1523, 811, "red"], [1628, 829, "amber"], [1358, 529, "teal"],
];
const assets = [
  { name: "Allentown Hydro Station", score: 92, tone: "red", h: 89, pt: 3 },
  { name: "Syracuse B", score: 87, tone: "red", h: 87.5, pt: 3 },
  { name: "Gray Facility", score: 63, tone: "yellow", h: 87.5, pt: 3 },
  { name: "Syracuse A", score: 52, tone: "yellow", h: 87.5, pt: 3 },
  { name: "Mesa Wind Farm", score: 28, tone: "mint", h: 92.5, pt: 7 },
  { name: "Santa Ana Station", score: 18, tone: "mint", h: 86, pt: 4 },
];
const marks = { red: AlertMark, yellow: SearchMark, mint: CheckMark };
const scoreColor = { red: c.redText, yellow: c.amber, mint: c.teal };

const StatusTile = ({ tone }) => {
  const Mark = marks[tone];
  return (
    <Tile $tone={tone}>
      <Mark />
    </Tile>
  );
};

const Hazard = ({ w, tone, label, score }) => {
  const Mark = marks[tone];
  return (
    <HazardCard $w={w} $tone={tone}>
      <HazardTop>
        <HazardTile $tone={tone}>
          <Mark size={46} />
        </HazardTile>
        <HazardLabel>{label}</HazardLabel>
      </HazardTop>
      <HazardScore $tone={tone}>{score}</HazardScore>
    </HazardCard>
  );
};

export default function App() {
  return (
    <>
      <Global />
      <Page>
        <Sidebar>
          <LogoBox>
            <Logo />
            <LogoText>ERM</LogoText>
          </LogoBox>
          {nav.map(([label, Icon], i) => (
            <NavRow key={label} $active={i === 0}>
              <NavIcon $active={i === 0}>
                <Icon />
              </NavIcon>
              <NavLabel>{label}</NavLabel>
            </NavRow>
          ))}
          <NavSpacer />
          {[UserCircle, Sliders, ChevronLeft].map((Icon, i) => (
            <NavRow key={i}>
              <NavIcon>
                <Icon />
              </NavIcon>
            </NavRow>
          ))}
        </Sidebar>

        <Main>
          <WorldMap />
          {pins.map(([x, y, tone]) => (
            <Pin key={`${x}`} x={x} y={y} tone={tone} />
          ))}
          <Popup>
            <PopupHandle />
            <PopupBody>
              <PopupHead>
                <StatusTile tone="red" />
                <PopupName>Allentown Hydro Station</PopupName>
                {[["yellow", 48], ["red", 71], ["red", 83]].map(([tone, n]) => (
                  <Badge key={n}>
                    <StatusTile tone={tone} />
                    <BadgeValue $tone={tone}>{n}</BadgeValue>
                  </Badge>
                ))}
              </PopupHead>
              <PopupMeta>
                <Fact>Adaptations: <b>62</b></Fact>
                <Fact>Complete: <b>28</b></Fact>
                <Fact>Cost: <b>$2,500,000</b></Fact>
                <MetaDivider />
                <Arrow len={24} sw={2.6} />
              </PopupMeta>
            </PopupBody>
          </Popup>

          <Top>
            <Hero>
              <Title>Your physical risk exposure</Title>
              <Pager>
                <PagerButton $disabled>
                  <Arrow flip />
                </PagerButton>
                <PagerButton>
                  <ButtonText>Next</ButtonText>
                  <Arrow />
                </PagerButton>
              </Pager>
            </Hero>
            <HazardPanel>
              <Heading $track={1.05}>Your top hazards</Heading>
              <Sub $m="11px 0 11px 1px">Based on 30yr climate average</Sub>
              <HazardRow>
                <Hazard w={156} tone="red" label="Landslide" score={83} />
                <Hazard w={154} tone="red" label="Extreme heat" score={76} />
                <Hazard w={157} tone="yellow" label="Cyclones" score={63} />
              </HazardRow>
              <Sub $m="72px 0 6px 2px">Your 10 year risk score: <b>48</b></Sub>
              <ScoreBar $w={418} $h={9} $color={c.yellow} />
              <ScoreBar $w={543} $h={8} $color="#c8c8c8" />
              <Sub $m="2px 0 3px 0">Your sector average risk score: <b>71</b></Sub>
              <DownloadButton>
                <ButtonText>Download your summary report....</ButtonText>
                <Arrow />
              </DownloadButton>
            </HazardPanel>
          </Top>

          <Bottom>
            <div>
              <ColumnHead $pad="0 1px 0 5px">
                <Heading $track={1}>Key assets</Heading>
                <ViewAll>View all</ViewAll>
              </ColumnHead>
              <AssetCard>
                <AssetList>
                  {assets.map((a, i) => (
                    <AssetRow key={a.name} $h={a.h} $pt={a.pt} $last={i === 5}>
                      <StatusTile tone={a.tone} />
                      <AssetName $bold={i === 0}>{a.name}</AssetName>
                      <AssetScore $color={scoreColor[a.tone]}>{a.score}</AssetScore>
                      <Crosshair />
                    </AssetRow>
                  ))}
                </AssetList>
                <ScrollTrack>
                  <ScrollThumb />
                </ScrollTrack>
              </AssetCard>
            </div>

            <div>
              <ColumnHead>
                <Heading $track={1.05} $left={1}>Climate data</Heading>
              </ColumnHead>
              <Card $pad="28px 40px 0 41px">
                <Select>
                  Temperature
                  <ChevronDown />
                </Select>
                <ChartFrame>
                  <ClimateChart />
                </ChartFrame>
                <TagRow>
                  {[0, 1, 1, 0, 0].map((on, i) => (
                    <Tag key={i} $on={on === 1}>Tag</Tag>
                  ))}
                </TagRow>
              </Card>
            </div>

            <AdaptationColumn>
              <ColumnHead $pad="0 7px 0 0">
                <Heading $track={1.45} $left={-1}>Adaptations</Heading>
                <ViewAll>View all</ViewAll>
              </ColumnHead>
              <Card $pad="39px 38px 39px 39px">
                <StatBox $row $w={468} $h={77.5} $pad="0 23px 0 20px">
                  <StatLabel>Total adaptations</StatLabel>
                  <Push />
                  <Clipboard />
                  <StatNumber>242</StatNumber>
                </StatBox>
                <Push />
                <StatBox $w={468} $h={115} $pad="18px 20px">
                  <StatLabel>Asset most behind target</StatLabel>
                  <StatStrong $mt={14}>San Jose Station Site One</StatStrong>
                </StatBox>
                <Push />
                <StatPair>
                  <StatBox $w={195} $h={194} $pad="18px 20px">
                    <StatLabel>Total costs</StatLabel>
                    <StatStrong $mt={93}>$15,580,000</StatStrong>
                  </StatBox>
                  <StatBox $light $w={234} $h={194} $pad="13px 14px">
                    <StatLabel>Spend to date</StatLabel>
                    <StatIcons>
                      <Arrow len={27} />
                      <Calendar />
                    </StatIcons>
                    <StatStrong $mt={55}>$1,258,000</StatStrong>
                  </StatBox>
                </StatPair>
              </Card>
            </AdaptationColumn>
          </Bottom>
        </Main>
      </Page>
    </>
  );
}
